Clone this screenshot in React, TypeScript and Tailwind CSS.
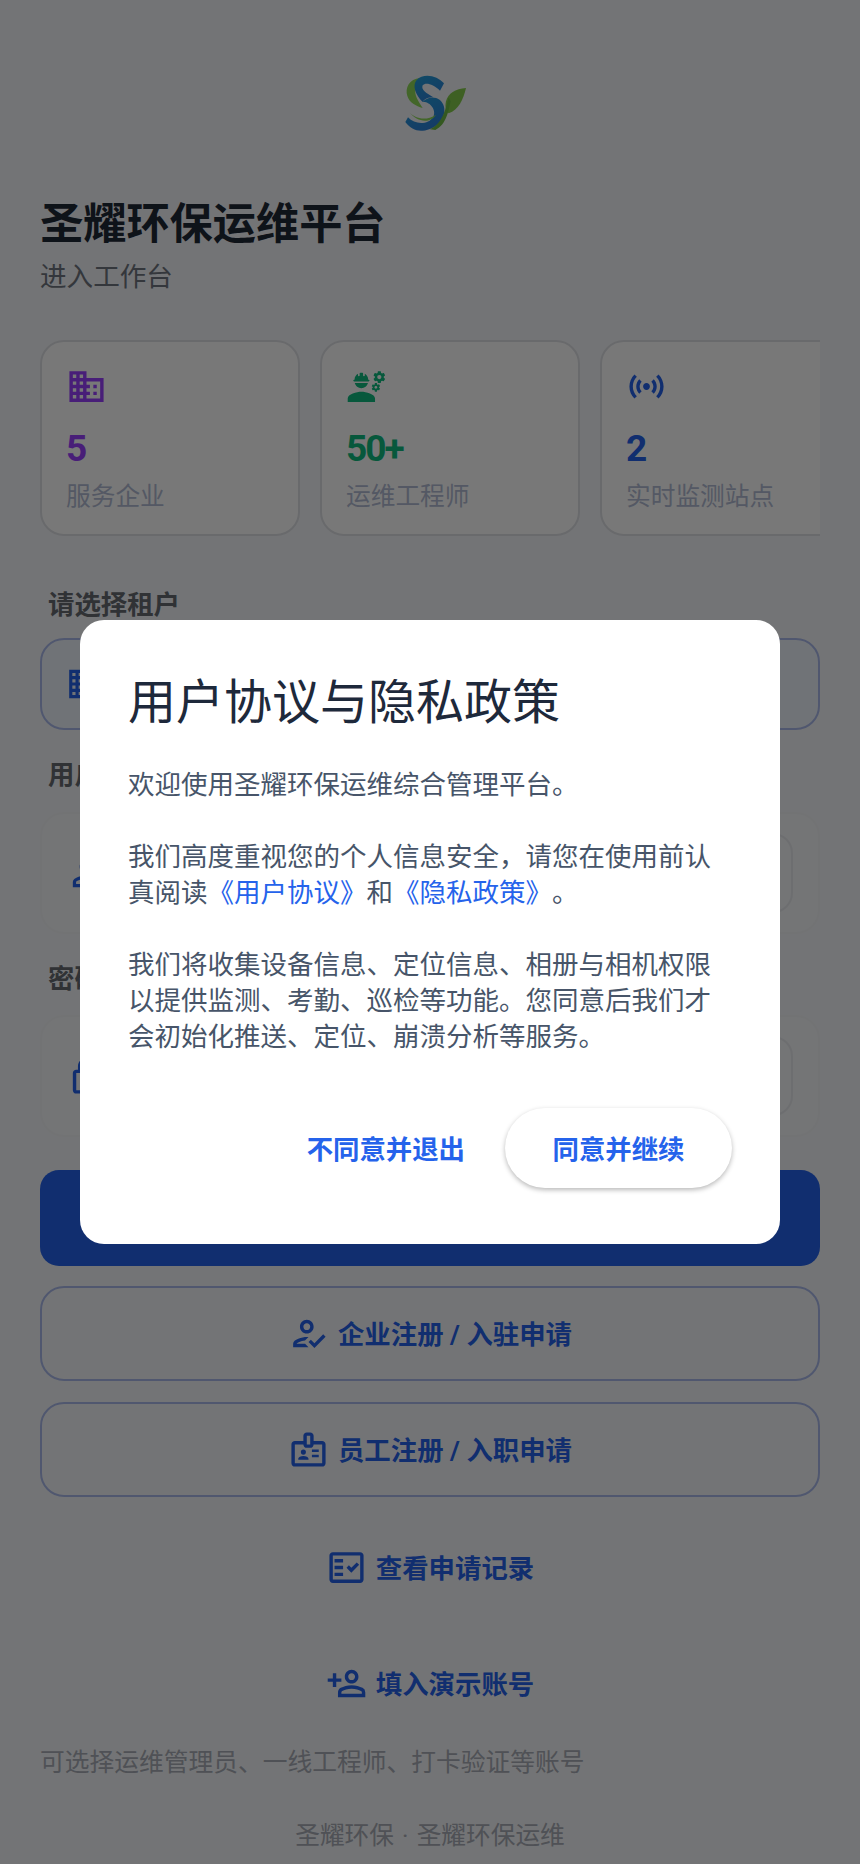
import React from "react";
import {
  MdDomain,
  MdEngineering,
  MdSensors,
  MdOutlineHowToReg,
  MdOutlineBadge,
  MdOutlineFactCheck,
  MdOutlinePersonAddAlt,
  MdOutlineLock,
  MdPersonOutline,
} from "react-icons/md";

function Logo() {
  return (
    <svg width="100" height="80" viewBox="0 0 300 240" aria-hidden="true">
      <defs>
        <linearGradient id="sb" x1="0" y1="0" x2="0.6" y2="1">
          <stop offset="0" stopColor="#22a0d8" />
          <stop offset="1" stopColor="#2c7fd8" />
        </linearGradient>
      </defs>
      <path d="M120 54 C88 56 74 84 82 108 C88 128 108 138 128 144 C116 124 100 104 108 84 C112 72 120 64 132 58 Z" fill="#8ed858" />
      <path d="M192 70 L180 92 C160 72 136 66 128 76 C122 90 140 100 160 112 C146 112 134 116 128 126 C106 104 96 76 110 60 C130 38 172 46 192 70 Z" fill="url(#sb)" />
      <path d="M128 126 C146 104 184 108 192 140 C200 174 170 208 128 212 C108 214 90 204 76 186 L84 172 C104 194 144 196 160 170 C170 150 150 124 128 126 Z" fill="url(#sb)" />
      <path d="M88 156 C104 176 138 184 168 164 C150 192 110 186 88 156 Z" fill="#8ed858" />
      <path d="M258 84 C226 86 204 100 198 124 C194 142 198 154 206 160 C236 150 250 118 258 84 Z" fill="#84cc4c" />
      <path d="M206 112 C196 150 188 190 150 208 L166 210 C200 194 206 150 212 124 Z" fill="#6fbc44" />
    </svg>
  );
}

function Stat({
  icon,
  value,
  label,
  color,
}: {
  icon: React.ReactNode;
  value: string;
  label: string;
  color: string;
}) {
  return (
    <div className="h-[196px] w-[260px] shrink-0 rounded-[24px] border-2 border-[#dfe1e6] bg-white pl-[24px] pt-[24px]">
      <div className={color}>{icon}</div>
      <div className={`mt-[20px] h-[44px] text-[37px] leading-[44px] font-bold tracking-[-2px] ${color}`}>{value}</div>
      <div className="mt-[8px] h-[36px] text-[24.7px] leading-[36px] text-[#b2bbd4] whitespace-nowrap">{label}</div>
    </div>
  );
}

function Field({ icon }: { icon: React.ReactNode }) {
  return (
    <div className="flex h-[122px] items-center justify-between rounded-[24px] border-2 border-[#f3f4f7] bg-[#f6f8fb] pl-[24px] pr-[25px]">
      <div className="text-[#2563eb]">{icon}</div>
      <div className="h-[80px] w-[80px] rounded-[20px] border-2 border-[#e8eaee]" />
    </div>
  );
}

function Outlined({ icon, text }: { icon: React.ReactNode; text: string }) {
  return (
    <div className="flex h-[95px] items-center justify-center gap-[9px] rounded-[24px] border-2 border-[#aabaec] text-[#2563eb]">
      {icon}
      <span className="pt-[5px] text-[26.4px] font-bold">{text}</span>
    </div>
  );
}

function TextRow({ icon, text }: { icon: React.ReactNode; text: string }) {
  return (
    <div className="flex h-[96px] items-center justify-center gap-[9px] text-[#2563eb]">
      {icon}
      <span className="pt-[5px] text-[26.4px] font-bold">{text}</span>
    </div>
  );
}

export default function App() {
  return (
    <div className="relative h-[1864px] w-[860px] overflow-hidden bg-[#f5f7fa] font-[Roboto,'Noto_Sans_CJK_SC',sans-serif]">
      <div className="px-[40px] pt-[60px]">
        <div className="flex justify-center">
          <Logo />
        </div>
        <h1 className="mt-[57px] h-[56px] text-[43.2px] leading-[56px] font-bold text-[#1f2937]">圣耀环保运维平台</h1>
        <p className="mt-[6px] h-[36px] text-[26.6px] leading-[36px] text-[#6f7580]">进入工作台</p>

        <div className="mt-[45px] flex gap-[20px] overflow-hidden">
          <Stat icon={<MdDomain size={41} />} value="5" label="服务企业" color="text-[#9a40ff]" />
          <Stat icon={<MdEngineering size={41} />} value="50+" label="运维工程师" color="text-[#0fbc80]" />
          <Stat icon={<MdSensors size={41} />} value="2" label="实时监测站点" color="text-[#2563eb]" />
        </div>

        <div className="mt-[51px] h-[36px] pl-[8px] text-[26.4px] leading-[36px] font-bold text-[#666a72]">请选择租户</div>
        <div className="mt-[15px] flex h-[92px] items-center rounded-[24px] border-2 border-[#aabaec] bg-[#eff4fc] pl-[24px] text-[#2563eb]">
          <MdDomain size={38} />
        </div>

        <div className="mt-[27px] h-[36px] pl-[8px] text-[26.4px] leading-[36px] font-bold text-[#666a72]">用户名</div>
        <div className="mt-[19px]">
          <Field icon={<MdPersonOutline size={41} />} />
        </div>

        <div className="mt-[27px] h-[36px] pl-[8px] text-[26.4px] leading-[36px] font-bold text-[#666a72]">密码</div>
        <div className="mt-[18px]">
          <Field icon={<MdOutlineLock size={41} />} />
        </div>

        <div className="mt-[33px] h-[96px] rounded-[19px] bg-[#2563eb]" />
        <div className="mt-[20px]">
          <Outlined icon={<MdOutlineHowToReg size={41} />} text="企业注册 / 入驻申请" />
        </div>
        <div className="mt-[21px]">
          <Outlined icon={<MdOutlineBadge size={41} />} text="员工注册 / 入职申请" />
        </div>
        <div className="mt-[22px]">
          <TextRow icon={<MdOutlineFactCheck size={41} />} text="查看申请记录" />
        </div>
        <div className="mt-[20px]">
          <TextRow icon={<MdOutlinePersonAddAlt size={41} className="-scale-x-100" />} text="填入演示账号" />
        </div>

        <div className="mt-[14px] h-[36px] text-[24.75px] leading-[36px] text-[#a8acb6] whitespace-nowrap">可选择运维管理员、一线工程师、打卡验证等账号</div>
        <div className="mt-[37px] h-[36px] text-center text-[24.7px] leading-[36px] text-[#a8acb6] [word-spacing:2px]">圣耀环保 · 圣耀环保运维</div>
      </div>

      <div className="absolute inset-0 flex items-center justify-center bg-black/[0.53]">
        <div className="w-[700px] rounded-[24px] bg-white px-[48px] pt-[48px] pb-[56px]">
          <h2 className="h-[70px] text-[48px] leading-[70px] font-normal text-[#1e293b]">用户协议与隐私政策</h2>
          <p className="mt-[29px] whitespace-pre-line text-[26.5px] leading-[36px] text-[#475569] [text-spacing-trim:space-all]">
            {"欢迎使用圣耀环保运维综合管理平台。\n\n我们高度重视您的个人信息安全，请您在使用前认真阅读"}
            <span className="text-[#2563eb]">《用户协议》</span>和<span className="text-[#2563eb]">《隐私政策》</span>
            {"。\n\n我们将收集设备信息、定位信息、相册与相机权限以提供监测、考勤、巡检等功能。您同意后我们才会初始化推送、定位、崩溃分析等服务。"}
          </p>
          <div className="mt-[53px] flex items-center justify-end gap-[40px]">
            <span className="pt-[6px] text-[26.4px] font-bold text-[#2563eb]">不同意并退出</span>
            <span className="flex h-[80px] w-[227px] items-center justify-center rounded-full bg-white pt-[6px] text-[26.4px] font-bold text-[#2563eb] shadow-[0_2px_5px_rgba(0,0,0,0.28)]">
              同意并继续
            </span>
          </div>
        </div>
      </div>
    </div>
  );
}
